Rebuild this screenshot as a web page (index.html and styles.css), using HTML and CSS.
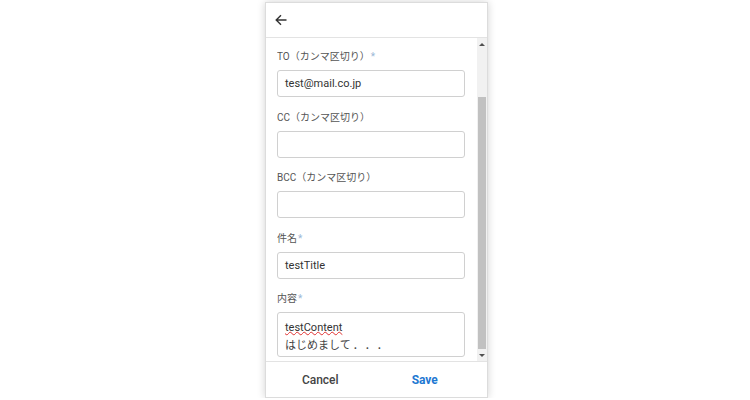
FILE: index.html
```html
<!DOCTYPE html>
<html lang="ja">
<head>
<meta charset="utf-8">
<link rel="stylesheet" href="styles.css">
</head>
<body>
<div class="panel">
  <div class="header">
    <svg class="back" width="12" height="12" viewBox="0 0 12 12"><path d="M11.5 6H1.2M6 1.2L1.2 6L6 10.8" fill="none" stroke="#333" stroke-width="1.4"/></svg>
  </div>
  <div class="body">
    <div class="content">
      <div class="field">
        <div class="label">TO（カンマ区切り）<span class="req">*</span></div>
        <div class="input">test@mail.co.jp</div>
      </div>
      <div class="field">
        <div class="label">CC（カンマ区切り）</div>
        <div class="input"></div>
      </div>
      <div class="field">
        <div class="label">BCC（カンマ区切り）</div>
        <div class="input"></div>
      </div>
      <div class="field">
        <div class="label">件名<span class="req">*</span></div>
        <div class="input">testTitle</div>
      </div>
      <div class="field">
        <div class="label">内容<span class="req">*</span></div>
        <div class="input area"><div class="line"><span class="spell">testContent</span></div><div class="line jp">はじめまして<span class="dots">．．．</span></div></div>
      </div>
    </div>
    <div class="scrollbar">
      <div class="arrow up"></div>
      <div class="track"><div class="thumb"></div></div>
      <div class="arrow down"></div>
    </div>
  </div>
  <div class="footer">
    <div class="btn cancel">Cancel</div>
    <div class="btn save">Save</div>
  </div>
</div>
</body>
</html>
```

FILE: styles.css
```css
html, body {
  margin: 0;
  padding: 0;
  background: #fff;
}
body {
  font-family: Roboto, "Liberation Sans", "Noto Sans CJK JP", sans-serif;
  color: #333;
  padding-top: 2px;
}
.panel {
  margin-left: 265px;
  width: 223px;
  height: 396px;
  box-sizing: border-box;
  border: 1px solid #dcdcdc;
  box-shadow: 0 0 8px rgba(0,0,0,0.18);
  display: flex;
  flex-direction: column;
  background: #fff;
  overflow: hidden;
}
.header {
  height: 34px;
  flex: none;
  border-bottom: 1px solid #e3e3e3;
  display: flex;
  align-items: center;
  padding-left: 9px;
}
.back { display: block; }
.body {
  flex: 1;
  display: flex;
  overflow: hidden;
  min-height: 0;
}
.content {
  flex: 1;
  padding: 12px 12px 0 11px;
  overflow: hidden;
}
.field { margin-bottom: 13.5px; }
.label {
  font-size: 10px;
  height: 14px;
  line-height: 14px;
  color: #555;
  margin-bottom: 6px;
  overflow: hidden;
  white-space: nowrap;
}
.req { color: #9bb8d6; margin-left: 1px; }
.input {
  height: 27px;
  box-sizing: border-box;
  border: 1px solid #d0d0d0;
  border-radius: 3px;
  padding: 0 7px;
  font-size: 11px;
  line-height: 25px;
  color: #333;
}
.input.area {
  height: 45px;
  padding-top: 7px;
}
.line {
  height: 16px;
  line-height: 16px;
  white-space: nowrap;
}
.jp {
  font-family: "Noto Sans CJK JP", sans-serif;
  font-size: 11px;
  color: #444;
}
.dots {
  letter-spacing: 6.5px;
  margin-left: 2px;
}
.spell {
  text-decoration-line: underline;
  text-decoration-style: wavy;
  text-decoration-color: #e03030;
  text-decoration-thickness: 1px;
  text-underline-offset: 0px;
}
.scrollbar {
  width: 10px;
  flex: none;
  background: #f1f1f1;
  display: flex;
  flex-direction: column;
  align-items: center;
}
.arrow {
  width: 0;
  height: 0;
  border-left: 3px solid transparent;
  border-right: 3px solid transparent;
  flex: none;
}
.arrow.up {
  border-bottom: 3px solid #505050;
  margin: 5px 0 51px;
}
.track { flex: 1; width: 8px; }
.thumb {
  height: 252px;
  background: #c1c1c1;
}
.arrow.down {
  border-top: 3px solid #505050;
  margin: 5px 0 5px;
}
.footer {
  height: 35px;
  flex: none;
  border-top: 1px solid #e3e3e3;
  display: grid;
  grid-template-columns: 1fr 1fr;
  padding: 0 10px 0 2px;
  align-items: center;
}
.btn {
  text-align: center;
  font-size: 12px;
  font-weight: 500;
}
.cancel { color: #444; }
.save { color: #1e78d2; font-weight: 700; }
```
